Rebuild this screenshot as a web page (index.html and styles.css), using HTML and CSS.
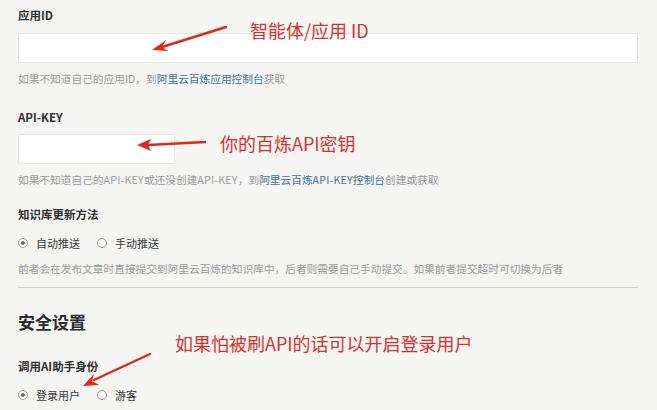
FILE: index.html
```html
<!DOCTYPE html>
<html lang="zh-CN">
<head>
<meta charset="utf-8">
<link rel="stylesheet" href="styles.css">
</head>
<body>
<div class="page">
  <div class="label first">应用ID</div>
  <div class="input wide"></div>
  <div class="help">如果不知道自己的应用ID，到<span class="link">阿里云百炼应用控制台</span>获取</div>

  <div class="label gap-l">API-KEY</div>
  <div class="input short"></div>
  <div class="help">如果不知道自己的<span class="lat">API-KEY</span>或还没创建<span class="lat">API-KEY</span>，到<span class="link">阿里云百炼<span class="lat">API-KEY</span>控制台</span>创建或获取</div>

  <div class="label gap-m">知识库更新方法</div>
  <div class="radios">
    <span class="radio"><span class="dot on"></span>自动推送</span>
    <span class="radio"><span class="dot"></span>手动推送</span>
  </div>
  <div class="help">前者会在发布文章时直接提交到阿里云百炼的知识库中，后者则需要自己手动提交。如果前者提交超时可切换为后者</div>

  <div class="rule"></div>
  <div class="heading">安全设置</div>

  <div class="label gap-h">调用AI助手身份</div>
  <div class="radios">
    <span class="radio"><span class="dot on"></span>登录用户</span>
    <span class="radio"><span class="dot"></span>游客</span>
  </div>
</div>

<div class="note n1">智能体/应用 ID</div>
<div class="note n2">你的百炼API密钥</div>
<div class="note n3">如果怕被刷API的话可以开启登录用户</div>

<svg class="arrows" width="657" height="410" viewBox="0 0 657 410">
  <path d="M226 27 L162 47" stroke="#e0261f" stroke-width="2.6" stroke-linecap="round" fill="none"/>
  <polygon points="152,50 166,40 162,47 168,51" fill="#e0261f"/>
  <path d="M205 142 L148 145" stroke="#e0261f" stroke-width="2.4" stroke-linecap="round" fill="none"/>
  <polygon points="137,145 151,139 148,145 151,151" fill="#e0261f"/>
  <path d="M150 354 L94 380" stroke="#e0261f" stroke-width="2.4" stroke-linecap="round" fill="none"/>
  <polygon points="83,386 94,374 92,381 99,385" fill="#e0261f"/>
</svg>
</body>
</html>
```

FILE: styles.css
```css
* { box-sizing: border-box; }
html, body {
  margin: 0;
  padding: 0;
  background: #f5f5f4;
  width: 657px;
  height: 410px;
  overflow: hidden;
  font-family: "Noto Sans CJK SC", "Noto Sans", sans-serif;
}
.page {
  padding: 0 19px 0 18px;
  position: relative;
}
.label {
  font-size: 11.5px;
  font-weight: 700;
  color: #2f2f2f;
  line-height: 20px;
  height: 20px;
}
.label.first { margin-top: 5px; }
.label.gap-l { margin-top: 20px; }
.label.gap-m { margin-top: 16px; }
.label.gap-h { margin-top: 21px; }
.input {
  margin-top: 8px;
  height: 30px;
  background: #ffffff;
  border: 1px solid #e6e6e4;
  border-radius: 2px;
}
.input.short { margin-top: 7px; }
.input.wide { width: 620px; }
.input.short { width: 157px; }
.help {
  margin-top: 8px;
  font-size: 10.7px;
  line-height: 16px;
  color: #9a9a9a;
  white-space: nowrap;
}
.lat { letter-spacing: 0.2px; }
.link { color: #3c7499; }
.radios {
  margin-top: 9px;
  display: flex;
  gap: 17px;
  font-size: 11px;
  line-height: 20px;
  color: #3a3a3a;
}
.radio {
  display: flex;
  align-items: center;
  gap: 8px;
}
.dot {
  width: 10px;
  height: 10px;
  border: 1px solid #9a9a9a;
  border-radius: 50%;
  background: #fff;
  position: relative;
}
.dot.on::after {
  content: "";
  position: absolute;
  left: 2px;
  top: 2px;
  width: 4px;
  height: 4px;
  border-radius: 50%;
  background: #6a6a6a;
}
.rule {
  margin-top: 10px;
  width: 620px;
  height: 1px;
  background: #cfcfcd;
}
.heading {
  margin-top: 21px;
  font-size: 17px;
  font-weight: 700;
  color: #2c2c2c;
  line-height: 26px;
}
.note {
  position: absolute;
  color: #d8312c;
  font-size: 18px;
  line-height: 22px;
  white-space: nowrap;
  font-family: "Noto Sans CJK SC", sans-serif;
}
.n1 { left: 250px; top: 19px; }
.n2 { left: 220px; top: 132px; }
.n3 { left: 175px; top: 332px; }
.arrows {
  position: absolute;
  left: 0;
  top: 0;
  pointer-events: none;
}
```
